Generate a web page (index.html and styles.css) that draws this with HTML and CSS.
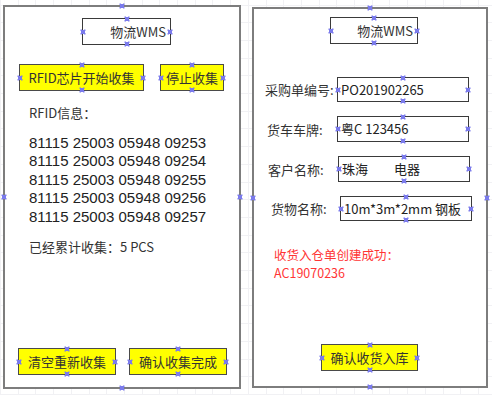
FILE: index.html
```html
<!DOCTYPE html>
<html lang="zh-CN">
<head>
  <meta charset="UTF-8" />
  <meta name="viewport" content="width=device-width, initial-scale=1.0"/>
  <title>物流WMS</title>
  <link rel="stylesheet" href="styles.css">
</head>
<body>
  <div class="sheet">

    <section class="panel panel-collect">
      <i class="mk mk-t"></i><i class="mk mk-r"></i><i class="mk mk-b"></i><i class="mk mk-l"></i>

      <div class="title shape">物流WMS
        <i class="mk mk-t"></i><i class="mk mk-r"></i><i class="mk mk-b"></i><i class="mk mk-l"></i>
      </div>

      <div class="btn-row top-row">
        <button class="btn shape btn-start">RFID芯片开始收集
          <i class="mk mk-t"></i><i class="mk mk-r"></i><i class="mk mk-b"></i><i class="mk mk-l"></i>
        </button>
        <button class="btn shape btn-stop">停止收集
          <i class="mk mk-t"></i><i class="mk mk-r"></i><i class="mk mk-b"></i><i class="mk mk-l"></i>
        </button>
      </div>

      <p class="info-label">RFID信息：</p>
      <ul class="tag-list">
        <li>81115 25003 05948 09253</li>
        <li>81115 25003 05948 09254</li>
        <li>81115 25003 05948 09255</li>
        <li>81115 25003 05948 09256</li>
        <li>81115 25003 05948 09257</li>
      </ul>
      <p class="total">已经累计收集：5 PCS</p>

      <div class="btn-row bottom-row">
        <button class="btn shape btn-half">清空重新收集
          <i class="mk mk-t"></i><i class="mk mk-r"></i><i class="mk mk-b"></i><i class="mk mk-l"></i>
        </button>
        <button class="btn shape btn-half">确认收集完成
          <i class="mk mk-t"></i><i class="mk mk-r"></i><i class="mk mk-b"></i><i class="mk mk-l"></i>
        </button>
      </div>
    </section>

    <section class="panel panel-receive">
      <i class="mk mk-t"></i><i class="mk mk-r"></i><i class="mk mk-b"></i><i class="mk mk-l"></i>

      <div class="title shape">物流WMS
        <i class="mk mk-t"></i><i class="mk mk-r"></i><i class="mk mk-b"></i><i class="mk mk-l"></i>
      </div>

      <div class="form">
        <div class="field f1">
          <span class="label">采购单编号:</span>
          <span class="value shape">PO201902265
            <i class="mk mk-t"></i><i class="mk mk-r"></i><i class="mk mk-b"></i><i class="mk mk-l"></i>
          </span>
        </div>
        <div class="field f2">
          <span class="label">货车车牌:</span>
          <span class="value shape">粤C 123456
            <i class="mk mk-t"></i><i class="mk mk-r"></i><i class="mk mk-b"></i><i class="mk mk-l"></i>
          </span>
        </div>
        <div class="field f3">
          <span class="label">客户名称:</span>
          <span class="value shape">珠海　　电器
            <i class="mk mk-t"></i><i class="mk mk-r"></i><i class="mk mk-b"></i><i class="mk mk-l"></i>
          </span>
        </div>
        <div class="field f4">
          <span class="label">货物名称:</span>
          <span class="value shape">10m*3m*2mm 钢板
            <i class="mk mk-t"></i><i class="mk mk-r"></i><i class="mk mk-b"></i><i class="mk mk-l"></i>
          </span>
        </div>
      </div>

      <div class="notice">
        <p>收货入仓单创建成功：</p>
        <p>AC19070236</p>
      </div>

      <button class="btn shape btn-confirm">确认收货入库
        <i class="mk mk-t"></i><i class="mk mk-r"></i><i class="mk mk-b"></i><i class="mk mk-l"></i>
      </button>
    </section>

  </div>
</body>
</html>
```

FILE: styles.css
```css
* {
  box-sizing: border-box;
}

body {
  margin: 0;
  width: 492px;
  height: 395px;
  overflow: hidden;
  font-family: "Noto Sans CJK SC", "Noto Sans", sans-serif;
  font-size: 13px;
  color: #333;
  background-color: #fff;
  background-image:
    repeating-linear-gradient(90deg, #f1f1f4 0 1px, transparent 1px 17.7px),
    repeating-linear-gradient(0deg, #f1f1f4 0 1px, transparent 1px 17.7px);
}

.sheet {
  display: flex;
  align-items: flex-start;
  gap: 11px;
  padding: 5px 0 0 3px;
}

.panel {
  position: relative;
  display: flex;
  flex-direction: column;
  border: 2px solid #7d7d7d;
  background: #fff;
}

.panel-collect {
  width: 238px;
  height: 384px;
  padding-bottom: 12px;
}

.panel-receive {
  width: 236px;
  height: 381px;
  margin-top: 2px;
  padding-bottom: 15px;
}

p, ul {
  margin: 0;
  padding: 0;
}

/* shapes with blue connection points */
.shape {
  position: relative;
  border: 1px solid #3a3a3a;
}

.mk {
  position: absolute;
  width: 5px;
  height: 5px;
  transform: translate(-50%, -50%);
  background:
    linear-gradient(45deg, transparent 38%, #7b7bec 38%, #7b7bec 62%, transparent 62%),
    linear-gradient(-45deg, transparent 38%, #7b7bec 38%, #7b7bec 62%, transparent 62%);
}

.mk-t { left: 50%; top: 0; }
.mk-b { left: 50%; top: 100%; }
.mk-l { left: 0; top: 50%; }
.mk-r { left: 100%; top: 50%; }

.panel > .mk-t { top: -1px; }
.panel > .mk-b { top: calc(100% + 1px); }
.panel > .mk-l { left: -1px; }
.panel > .mk-r { left: calc(100% + 1px); }

.title {
  width: 89px;
  height: 27px;
  margin: 11px 0 0 77px;
  padding-right: 4px;
  text-align: right;
  line-height: 25px;
}

.panel-receive .title {
  width: 88px;
  margin: 8px 0 0 76px;
}

.btn {
  font: inherit;
  color: #333;
  background: #ffff00;
  border-color: #4a4a4a;
  padding: 0;
  height: 27px;
  line-height: 25px;
  text-align: center;
  white-space: nowrap;
}

.btn-row {
  display: flex;
}

.top-row {
  margin: 19px 0 0 14px;
  gap: 16px;
}

.btn-start {
  width: 125px;
}

.btn-stop {
  width: 64px;
}

.info-label {
  margin: 13px 0 0 24px;
  line-height: 18px;
}

.tag-list {
  list-style: none;
  margin: 12px 0 0 24px;
  font-family: "Liberation Sans", Arial, sans-serif;
  font-size: 15px;
  line-height: 18.4px;
  color: #222;
}

.total {
  margin: 12px 0 0 24px;
  line-height: 18px;
}

.bottom-row {
  margin: auto 0 0 13px;
  gap: 13px;
}

.btn-half {
  width: 98px;
}

/* receiving form */
.form {
  display: flex;
  flex-direction: column;
  gap: 14px;
  margin-top: 33px;
}

.field {
  display: flex;
  align-items: center;
}

.label {
  width: 83px;
  padding-left: 11px;
  white-space: nowrap;
}

.value {
  width: 132px;
  height: 26px;
  padding-left: 3px;
  line-height: 24px;
  color: #222;
  white-space: nowrap;
}

.f2 .label { padding-left: 13px; }
.f3 .label { padding-left: 14px; width: 84px; }
.f4 .label { padding-left: 17px; width: 86px; }
.f1 .value, .f4 .value { height: 25px; }

.notice {
  margin: 25px 0 0 20px;
  color: #ff3535;
  font-size: 12.5px;
  line-height: 18.2px;
}

.btn-confirm {
  width: 97px;
  margin: auto 0 0 67px;
}
```
